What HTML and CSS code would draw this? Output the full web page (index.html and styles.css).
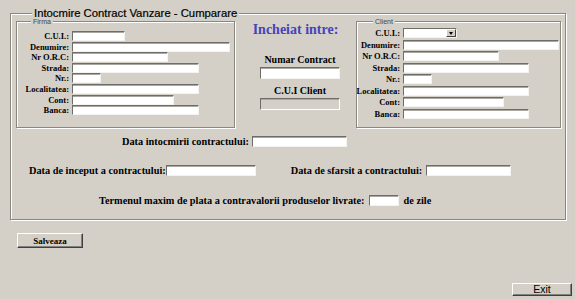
FILE: index.html
```html
<!DOCTYPE html>
<html lang="ro">
<head>
	<meta charset="UTF-8">
	<title>Intocmire Contract</title>
	<link rel="stylesheet" href="styles.css">
</head>
<body>
	<fieldset class="main">
		<legend>Intocmire Contract Vanzare - Cumparare</legend>
		<div class="top">
			<fieldset class="party firma">
				<legend>Firma</legend>
				<div class="rows">
					<label>C.U.I.:</label><input type="text" class="w53">
					<label>Denumire:</label><input type="text" class="w158">
					<label>Nr O.R.C:</label><input type="text" class="w96">
					<label>Strada:</label><input type="text" class="w127">
					<label>Nr.:</label><input type="text" class="w29">
					<label>Localitatea:</label><input type="text" class="w127">
					<label>Cont:</label><input type="text" class="w102">
					<label>Banca:</label><input type="text" class="w127">
				</div>
			</fieldset>
			<div class="middle">
				<div class="intre">Incheiat intre:</div>
				<div class="nr">
					<div class="cap">Numar Contract</div>
					<input type="text" class="w80 tall">
					<div class="cap cap2">C.U.I Client</div>
					<input type="text" class="w80 tall" disabled>
				</div>
			</div>
			<fieldset class="party client">
				<legend>Client</legend>
				<div class="rows">
					<label>C.U.I.:</label>
					<div class="combo"><input type="text" class="combo-field"><span class="drop"></span></div>
					<label>Denumire:</label><input type="text" class="w156">
					<label>Nr O.R.C:</label><input type="text" class="w96">
					<label>Strada:</label><input type="text" class="w126">
					<label>Nr.:</label><input type="text" class="w29">
					<label>Localitatea:</label><input type="text" class="w126">
					<label>Cont:</label><input type="text" class="w101">
					<label>Banca:</label><input type="text" class="w126">
				</div>
			</fieldset>
		</div>

		<div class="line l1">
			<span>Data intocmirii contractului:</span>
			<input type="text" class="w95 tall gap3">
		</div>
		<div class="line l2">
			<span>Data de inceput a contractului:</span>
			<input type="text" class="w90 tall">
			<span class="sfarsit">Data de sfarsit a contractului:</span>
			<input type="text" class="w85 tall gap4">
		</div>
		<div class="line l3">
			<span>Termenul maxim de plata a contravalorii produselor livrate:</span>
			<input type="text" class="w30 tall gap4">
			<span class="zile">de zile</span>
		</div>
	</fieldset>

	<div class="save">
		<button class="btn salveaza">Salveaza</button>
	</div>
	<div class="foot">
		<button class="btn exit">Exit</button>
	</div>
</body>
</html>
```

FILE: styles.css
```css
* { margin: 0; padding: 0; box-sizing: border-box; }
body {
	background-color: #d4d0c8;
	width: 575px;
	height: 299px;
	overflow: hidden;
	font-family: "Liberation Serif", serif;
	color: #000;
}

fieldset {
	border: 1px solid #8a8780;
	box-shadow: inset 1px 1px 0 #fff, 1px 1px 0 #fff;
	min-width: 0;
}

.main {
	margin: 7px 9px 0 10px;
	padding: 0 0 12px 0;
}
.main > legend {
	font-family: "Liberation Sans", Arial, sans-serif;
	font-size: 11.3px;
	line-height: 12px;
	margin-left: 21px;
	padding: 0 2px;
	background-color: #d4d0c8;
	-webkit-text-stroke: 0.2px #000;
}

.top {
	display: flex;
	align-items: stretch;
	margin-left: 5px;
}

.party > legend {
	font-family: "Liberation Sans", Arial, sans-serif;
	font-size: 7px;
	line-height: 5px;
	color: #444;
	padding: 0 2px;
	background-color: #d4d0c8;
}
.firma {
	width: 219px;
	padding: 7px 0 10px 0;
}
.firma > legend { margin-left: 14px; }
.client {
	width: 205px;
	padding: 4px 0 8px 0;
}
.client > legend { margin-left: 16px; }

.rows {
	display: grid;
	align-items: center;
	justify-items: start;
	column-gap: 3px;
}
.firma .rows {
	grid-template-columns: 52px auto;
	grid-auto-rows: 10px;
	row-gap: 0.6px;
}
.client .rows {
	grid-template-columns: 43px auto;
	grid-auto-rows: 10px;
	row-gap: 1.5px;
}
.rows label {
	justify-self: end;
	font-size: 8.5px;
	font-weight: bold;
	line-height: 10px;
	white-space: nowrap;
}

input {
	display: block;
	height: 10px;
	background-color: #fff;
	border: 1px solid;
	border-color: #6f6d68 #f4f3f0 #f4f3f0 #6f6d68;
	box-shadow: inset 0 1px 0 #a9a7a2;
	outline: none;
	font-size: 8px;
}
input:disabled {
	background-color: #d4d0c8;
	border-color: #6f6d68 #fff #fff #6f6d68;
}
input.tall { height: 12px; }

.w29 { width: 29px; }
.w30 { width: 30px; }
.w53 { width: 53px; }
.w80 { width: 80px; }
.w85 { width: 85px; }
.w90 { width: 90px; }
.w95 { width: 95px; }
.w96 { width: 96px; }
.w101 { width: 101px; }
.w102 { width: 102px; }
.w126 { width: 126px; }
.w127 { width: 127px; }
.w156 { width: 156px; }
.w158 { width: 158px; }

.combo {
	display: flex;
	width: 54px;
	height: 10px;
	background-color: #fff;
	border: 1px solid;
	border-color: #6f6d68 #f4f3f0 #f4f3f0 #6f6d68;
}
.combo-field {
	flex: 1;
	width: 0;
	min-width: 0;
	height: 8px;
	border: none;
	box-shadow: none;
}
.drop {
	width: 10px;
	height: 8px;
	background-color: #d4d0c8;
	border: 1px solid;
	border-color: #fff #404040 #404040 #fff;
	display: flex;
	align-items: center;
	justify-content: center;
}
.drop::after {
	content: "";
	border-left: 2.5px solid transparent;
	border-right: 2.5px solid transparent;
	border-top: 3px solid #000;
}

.middle {
	width: 121px;
	display: flex;
	flex-direction: column;
	align-items: center;
}
.intre {
	margin-top: 3px;
	font-size: 14px;
	line-height: 16px;
	font-weight: bold;
	color: #4444bc;
}
.nr {
	display: flex;
	flex-direction: column;
	align-items: center;
	padding-left: 9px;
	margin-top: 16px;
}
.cap {
	font-size: 10px;
	font-weight: bold;
	line-height: 12px;
	margin-bottom: 1px;
}
.cap2 { margin-top: 6px; }

.line {
	display: flex;
	align-items: center;
	height: 12px;
	font-size: 10.3px;
	font-weight: bold;
	white-space: nowrap;
}
.line input { height: 11px; }
.l1 { margin-top: 8px; padding-left: 111px; }
.l2 { margin-top: 17px; padding-left: 18px; }
.l3 { margin-top: 18px; padding-left: 88px; }
.gap3 { margin-left: 3px; }
.gap4 { margin-left: 4px; }
.sfarsit { margin-left: 35px; }
.zile { margin-left: 5px; }

.btn {
	background-color: #d4d0c8;
	border: 1px solid;
	border-color: #fff #404040 #404040 #fff;
	box-shadow: inset -1px -1px 0 #808080;
	color: #000;
}
.save { padding: 10px 0 0 17px; }
.salveaza {
	width: 66px;
	height: 15px;
	font-family: "Liberation Serif", serif;
	font-size: 9px;
	font-weight: bold;
}
.foot {
	display: flex;
	justify-content: flex-end;
	padding-right: 3px;
	margin-top: 35px;
}
.exit {
	width: 60px;
	height: 13px;
	font-family: "Liberation Sans", Arial, sans-serif;
	font-size: 10.5px;
	line-height: 11px;
}
```
